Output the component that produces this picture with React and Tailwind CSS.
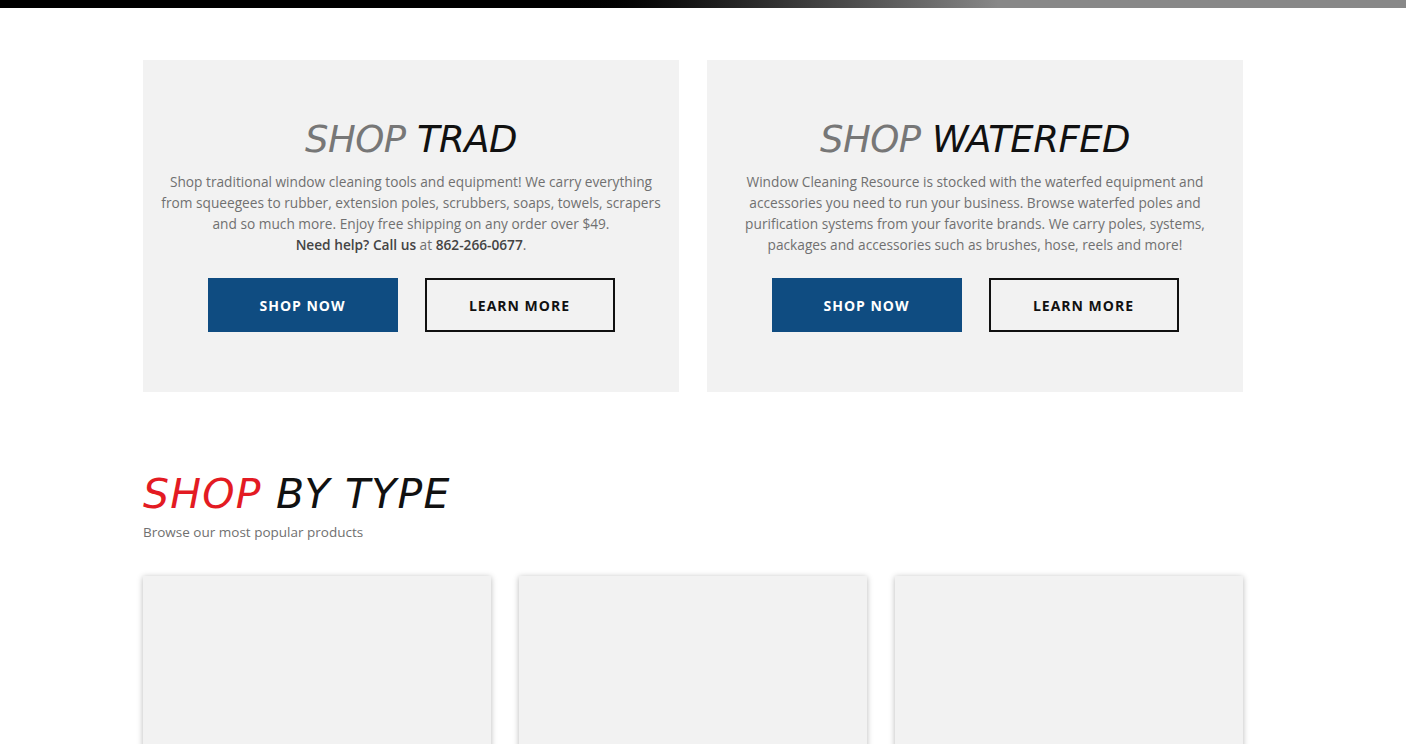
const promos = [
  {
    id: "trad",
    title: "TRAD",
    text: (
      <>
        Shop traditional window cleaning tools and equipment! We carry everything from squeegees to
        rubber, extension poles, scrubbers, soaps, towels, scrapers and so much more. Enjoy free
        shipping on any order over $49.
        <br />
        <strong className="font-semibold text-[#444]">Need help? Call us</strong> at{" "}
        <strong className="font-semibold text-[#444]">862-266-0677</strong>.
      </>
    ),
  },
  {
    id: "waterfed",
    title: "WATERFED",
    text: (
      <>
        Window Cleaning Resource is stocked with the waterfed equipment and accessories you need to
        run your business. Browse waterfed poles and purification systems from your favorite brands.
        We carry poles, systems, packages and accessories such as brushes, hose, reels and more!
      </>
    ),
  },
];

function PromoCard({ promo }) {
  return (
    <div className="bg-[#f2f2f2] h-[332px] flex flex-col items-center pt-[58px] px-[12px]">
      <h2 className="italic text-[37px] leading-[44px] tracking-[-0.5px] font-['DejaVu_Sans',sans-serif] text-[#111]">
        <span className="text-[#777]">SHOP</span> {promo.title}
      </h2>
      <p className="mt-[9px] text-center text-[13.7px] leading-[21px] text-[#707070] font-['Open_Sans',sans-serif] max-w-[506px]">
        {promo.text}
      </p>
      <div className="mt-auto mb-[60px] flex gap-[27px]">
        <button className="w-[190px] h-[54px] bg-[#0f4c81] text-white text-[14px] font-bold tracking-[1px] font-['Open_Sans',sans-serif]">
          SHOP NOW
        </button>
        <button className="w-[190px] h-[54px] border-2 border-[#111] text-[#111] text-[14px] font-bold tracking-[1px] font-['Open_Sans',sans-serif]">
          LEARN MORE
        </button>
      </div>
    </div>
  );
}

export default function App() {
  return (
    <div className="bg-white h-[744px] overflow-hidden">
      <div className="h-[8px] bg-linear-to-r from-black from-[39%] to-[#888] to-[71%]"></div>

      <div className="w-[1100px] ml-[143px]">
        <div className="mt-[52px] grid grid-cols-2 gap-[28px]">
          {promos.map((promo) => (
            <PromoCard key={promo.id} promo={promo} />
          ))}
        </div>

        <h2 className="mt-[76px] italic text-[41px] leading-[52px] tracking-[1.2px] font-['DejaVu_Sans',sans-serif] text-[#111]">
          <span className="text-[#e31b23]">SHOP</span> BY TYPE
        </h2>
        <p className="mt-[2px] text-[13.5px] text-[#707070] font-['Open_Sans',sans-serif]">
          Browse our most popular products
        </p>

        <div className="mt-[34px] grid grid-cols-3 gap-[28px]">
          <div className="h-[260px] bg-[#f2f2f2] shadow-[0_1px_6px_rgba(0,0,0,0.28)]"></div>
          <div className="h-[260px] bg-[#f2f2f2] shadow-[0_1px_6px_rgba(0,0,0,0.28)]"></div>
          <div className="h-[260px] bg-[#f2f2f2] shadow-[0_1px_6px_rgba(0,0,0,0.28)]"></div>
        </div>
      </div>
    </div>
  );
}
